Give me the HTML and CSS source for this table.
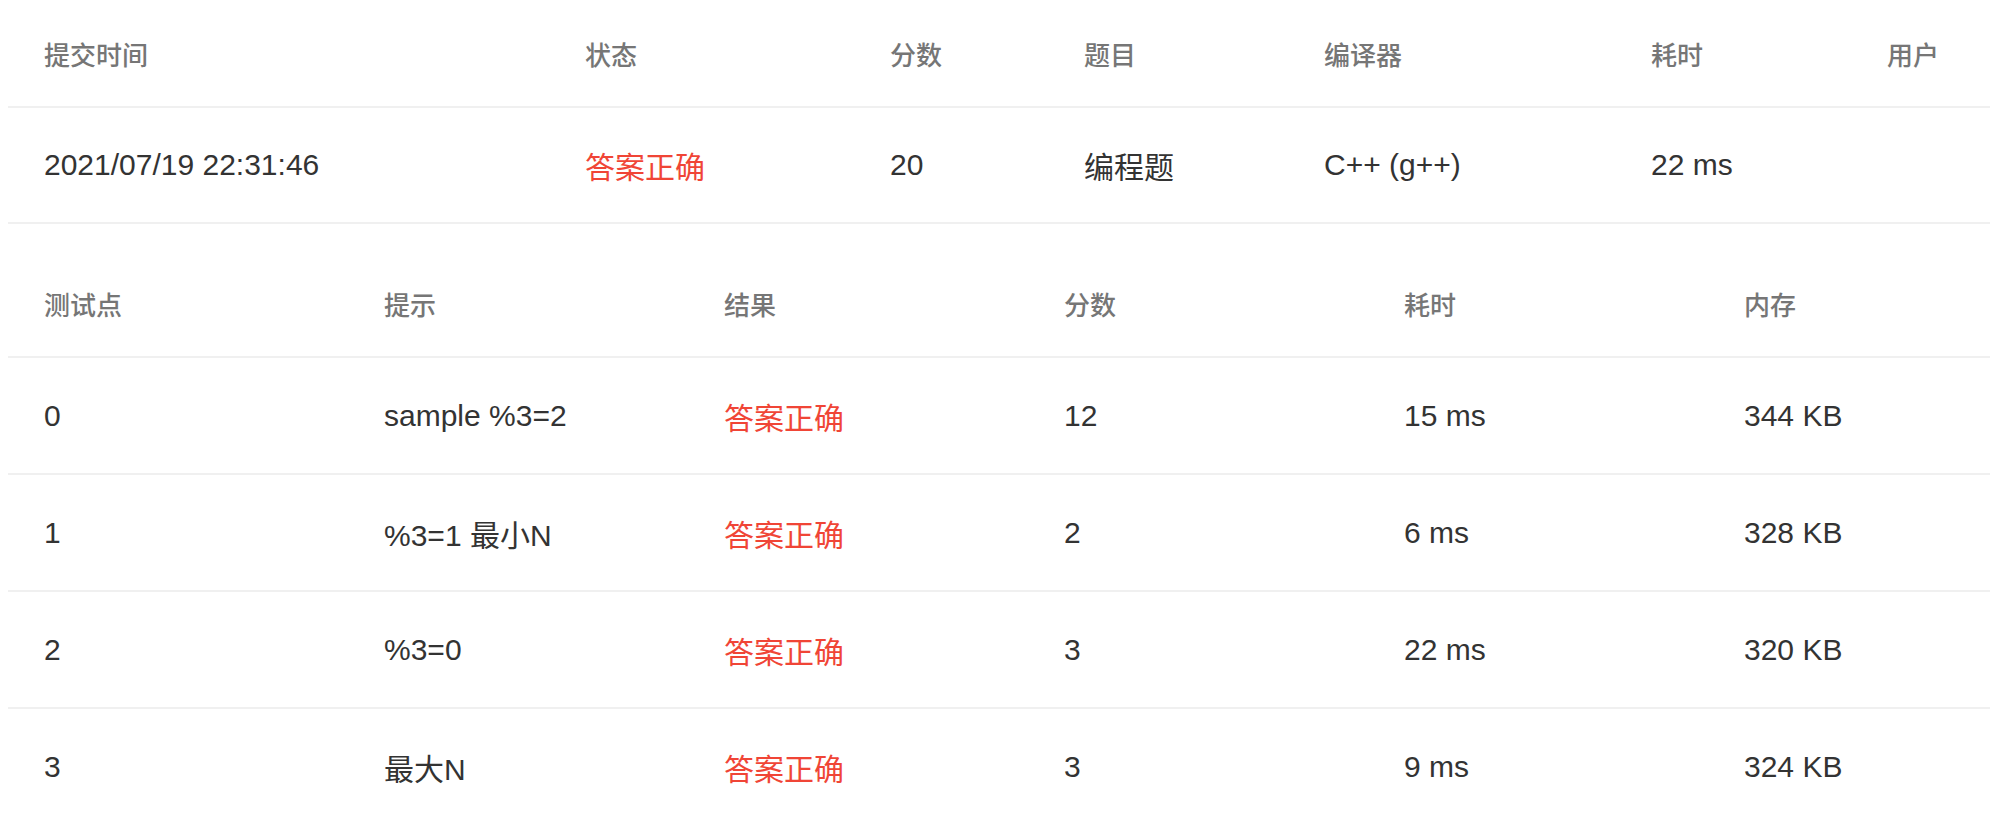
FILE: index.html
```html
<!DOCTYPE html>
<html lang="zh-CN">
<head>
<meta charset="utf-8">
<title>提交详情</title>
<link rel="stylesheet" href="styles.css">
</head>
<body>
<div class="page">
  <div class="table table-submit">
    <div class="row head">
      <div class="cell">提交时间</div>
      <div class="cell">状态</div>
      <div class="cell">分数</div>
      <div class="cell">题目</div>
      <div class="cell">编译器</div>
      <div class="cell">耗时</div>
      <div class="cell">用户</div>
    </div>
    <div class="row body">
      <div class="cell">2021/07/19 22:31:46</div>
      <div class="cell ok">答案正确</div>
      <div class="cell">20</div>
      <div class="cell">编程题</div>
      <div class="cell">C++ (g++)</div>
      <div class="cell">22 ms</div>
      <div class="cell"></div>
    </div>
  </div>

  <div class="table table-cases">
    <div class="row head">
      <div class="cell">测试点</div>
      <div class="cell">提示</div>
      <div class="cell">结果</div>
      <div class="cell">分数</div>
      <div class="cell">耗时</div>
      <div class="cell">内存</div>
    </div>
    <div class="row body">
      <div class="cell">0</div>
      <div class="cell">sample %3=2</div>
      <div class="cell ok">答案正确</div>
      <div class="cell">12</div>
      <div class="cell">15 ms</div>
      <div class="cell">344 KB</div>
    </div>
    <div class="row body">
      <div class="cell">1</div>
      <div class="cell">%3=1 最小N</div>
      <div class="cell ok">答案正确</div>
      <div class="cell">2</div>
      <div class="cell">6 ms</div>
      <div class="cell">328 KB</div>
    </div>
    <div class="row body">
      <div class="cell">2</div>
      <div class="cell">%3=0</div>
      <div class="cell ok">答案正确</div>
      <div class="cell">3</div>
      <div class="cell">22 ms</div>
      <div class="cell">320 KB</div>
    </div>
    <div class="row body">
      <div class="cell">3</div>
      <div class="cell">最大N</div>
      <div class="cell ok">答案正确</div>
      <div class="cell">3</div>
      <div class="cell">9 ms</div>
      <div class="cell">324 KB</div>
    </div>
  </div>
</div>
</body>
</html>
```

FILE: styles.css
```css
html, body {
  margin: 0;
  padding: 0;
  background: #ffffff;
  overflow: hidden;
}

body {
  font-family: "Liberation Sans", "Noto Sans CJK SC", sans-serif;
  color: #333333;
}

.page {
  padding-left: 8px;
  width: 2100px;
}

.table {
  display: flex;
  flex-direction: column;
}

.table-cases {
  margin-top: 26px;
}

.row {
  display: grid;
  align-items: center;
  border-bottom: 2px solid #f0f0f0;
}

.table-submit .row {
  grid-template-columns: 541px 305px 194px 240px 327px 236px 1fr;
}

.table-cases .row {
  grid-template-columns: 340px 340px 340px 340px 340px 1fr;
}

.row.head {
  height: 106px;
}

.row.body {
  height: 115px;
}

.table-submit .row.body {
  height: 114px;
}

.cell {
  padding-left: 36px;
  white-space: nowrap;
}

.head .cell {
  font-size: 26px;
  font-weight: 500;
  color: #767676;
}

.body .cell {
  font-size: 30px;
  color: #333333;
}

.body .cell.ok {
  color: #f04536;
}
```
